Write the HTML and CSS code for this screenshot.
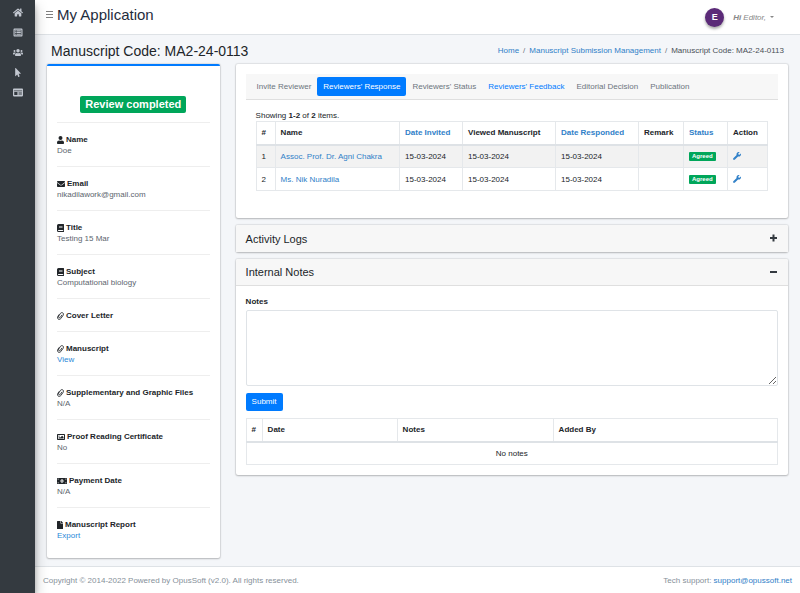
FILE: index.html
```
<!DOCTYPE html>
<html lang="en">
<head>
    <meta charset="UTF-8">
    <meta name="viewport" content="width=device-width, initial-scale=1.0">
    <title>Manuscript Code: MA2-24-0113</title>
    <link rel="stylesheet" href="styles.css">
</head>
<body>

    <!-- Icon set -->
    <svg class="sprite" aria-hidden="true">
        <symbol id="i-home" viewBox="0 0 576 512"><path d="M280 148 96 300v164a16 16 0 0 0 16 16h112a16 16 0 0 0 16-16v-96a16 16 0 0 1 16-16h64a16 16 0 0 1 16 16v96a16 16 0 0 0 16 16h112a16 16 0 0 0 16-16V300L296 148a12 12 0 0 0-16 0zM572 251l-84-69V44a12 12 0 0 0-12-12h-56a12 12 0 0 0-12 12v72l-89-74a48 48 0 0 0-61 0L4 251a12 12 0 0 0-2 17l26 31a12 12 0 0 0 17 2L280 107a12 12 0 0 1 15 0l236 194a12 12 0 0 0 17-2l25-31a12 12 0 0 0-1-17z"/></symbol>
        <symbol id="i-list" viewBox="0 0 512 512"><path fill-rule="evenodd" d="M464 32H48a48 48 0 0 0-48 48v352a48 48 0 0 0 48 48h416a48 48 0 0 0 48-48V80a48 48 0 0 0-48-48zM64 96h384v320H64zM96 128h64v64H96zm88 0h232v64H184zM96 224h64v64H96zm88 0h232v64H184zM96 320h64v64H96zm88 0h232v64H184z"/></symbol>
        <symbol id="i-users" viewBox="0 0 640 512"><path d="M96 224a64 64 0 1 0 0-128 64 64 0 0 0 0 128zm448 0a64 64 0 1 0 0-128 64 64 0 0 0 0 128zm32 32h-64c-18 0-34 7-45 19 40 22 69 62 75 109h66a32 32 0 0 0 32-32v-32a64 64 0 0 0-64-64zm-256 0a112 112 0 1 0 0-224 112 112 0 0 0 0 224zm77 32h-8a155 155 0 0 1-138 0h-8a115 115 0 0 0-115 115v29a48 48 0 0 0 48 48h288a48 48 0 0 0 48-48v-29a115 115 0 0 0-115-115zm-224-13c-11-12-27-19-45-19H64a64 64 0 0 0-64 64v32a32 32 0 0 0 32 32h66c6-47 35-87 75-109z"/></symbol>
        <symbol id="i-pointer" viewBox="0 0 320 512"><path d="M302 330H196l56 136c4 9 0 20-9 24l-49 21c-10 4-20-1-24-10l-53-129-87 89c-11 12-30 3-30-13V19C0 2 20-6 30 6l284 292c12 12 3 32-12 32z"/></symbol>
        <symbol id="i-news" viewBox="0 0 576 512"><path fill-rule="evenodd" d="M528 32H48A48 48 0 0 0 0 80v352a48 48 0 0 0 48 48h480a48 48 0 0 0 48-48V80a48 48 0 0 0-48-48zM48 144h480v36H48zM72 230h184v170H72zM320 230h192v30H320zm0 70h192v30H320zm0 70h192v30H320z"/></symbol>
        <symbol id="i-user" viewBox="0 0 448 512"><path d="M224 256a128 128 0 1 0 0-256 128 128 0 0 0 0 256zm90 32h-17a174 174 0 0 1-146 0h-17A134 134 0 0 0 0 422v42a48 48 0 0 0 48 48h352a48 48 0 0 0 48-48v-42a134 134 0 0 0-134-134z"/></symbol>
        <symbol id="i-mail" viewBox="0 0 512 512"><path d="M502 191c4-3 10 0 10 5v204a48 48 0 0 1-48 48H48a48 48 0 0 1-48-48V196c0-5 6-8 10-5 22 17 52 40 155 114 21 16 57 48 91 48 34 0 71-33 91-48 103-74 133-97 155-114zM256 320c23 0 57-29 74-42 133-96 143-105 174-129 5-4 8-10 8-17v-20a48 48 0 0 0-48-48H48a48 48 0 0 0-48 48v20c0 7 3 13 8 17 31 24 41 33 174 129 17 13 51 42 74 42z"/></symbol>
        <symbol id="i-book" viewBox="0 0 448 512"><path fill-rule="evenodd" d="M448 360V24a24 24 0 0 0-24-24H96A96 96 0 0 0 0 96v320a96 96 0 0 0 96 96h328a24 24 0 0 0 24-24v-16c0-8-4-14-9-19-4-15-4-59 0-74 5-4 9-11 9-19zM128 134c0-3 3-6 6-6h212c3 0 6 3 6 6v20c0 3-3 6-6 6H134c-3 0-6-3-6-6zm0 64c0-3 3-6 6-6h212c3 0 6 3 6 6v20c0 3-3 6-6 6H134c-3 0-6-3-6-6zm253 250H96a32 32 0 0 1 0-64h285c-2 17-2 47 0 64z"/></symbol>
        <symbol id="i-clip" viewBox="0 0 448 512"><path fill="none" stroke="currentColor" stroke-width="56" stroke-linecap="round" stroke-linejoin="round" d="M122 176 68 262C8 340 36 440 100 468c50 22 100 2 138-42L386 222c44-62 34-130-12-164-50-36-116-20-150 26L112 254c-26 42-20 84 10 106 32 22 68 10 92-20l96-138"/></symbol>
        <symbol id="i-image" viewBox="0 0 512 512"><path fill-rule="evenodd" d="M464 64H48a48 48 0 0 0-48 48v288a48 48 0 0 0 48 48h416a48 48 0 0 0 48-48V112a48 48 0 0 0-48-48zM64 128h384v256H64zM128 152a40 40 0 1 1 0 80 40 40 0 0 1 0-80zM96 352v-48l48-48 48 48 136-136 88 88v96z"/></symbol>
        <symbol id="i-money" viewBox="0 0 640 512"><path fill-rule="evenodd" d="M608 64H32A32 32 0 0 0 0 96v320a32 32 0 0 0 32 32h576a32 32 0 0 0 32-32V96a32 32 0 0 0-32-32zM48 400v-64a64 64 0 0 1 64 64zm0-224v-64h64a64 64 0 0 1-64 64zm272 192c-53 0-96-50-96-112s43-112 96-112 96 50 96 112-43 112-96 112zm272 32h-64a64 64 0 0 1 64-64zm0-224a64 64 0 0 1-64-64h64zM336 192v104h20v24h-72v-24h20v-68h-16v-24l24-12z"/></symbol>
        <symbol id="i-file" viewBox="0 0 384 512"><path fill-rule="evenodd" d="M224 136V0H24A24 24 0 0 0 0 24v464a24 24 0 0 0 24 24h336a24 24 0 0 0 24-24V160H248a24 24 0 0 1-24-24zM384 122v6H256V0h6c6 0 12 3 17 7l98 98c4 4 7 10 7 17z"/></symbol>
        <symbol id="i-wrench" viewBox="0 0 512 512"><path fill-rule="evenodd" d="M508 109c-2-9-13-12-20-5l-74 74-68-11-11-68 74-74c7-7 4-18-5-20a144 144 0 0 0-172 185L19 403a64 64 0 0 0 90 90l213-213a144 144 0 0 0 186-171zM64 472a24 24 0 1 1 0-48 24 24 0 0 1 0 48z"/></symbol>
    </svg>

    <nav class="sidebar" aria-label="Main">
        <a href="#" aria-label="Home"><svg class="icon"><use href="#i-home"/></svg></a>
        <a href="#" aria-label="Submissions"><svg class="icon"><use href="#i-list"/></svg></a>
        <a href="#" aria-label="Users"><svg class="icon"><use href="#i-users"/></svg></a>
        <a href="#" aria-label="Actions"><svg class="icon"><use href="#i-pointer"/></svg></a>
        <a href="#" aria-label="News"><svg class="icon"><use href="#i-news"/></svg></a>
    </nav>

    <div class="wrapper">
        <header class="navbar">
            <button class="menu-toggle" aria-label="Toggle menu"><span></span><span></span><span></span></button>
            <a class="brand" href="#">My Application</a>
            <span class="avatar">E</span>
            <button class="user-menu"><b>Hi</b> Editor, <span class="caret"></span></button>
        </header>

        <main class="content">
            <div class="content-header">
                <h1>Manuscript Code: MA2-24-0113</h1>
                <ol class="breadcrumb">
                    <li><a href="#">Home</a></li>
                    <li><a href="#">Manuscript Submission Management</a></li>
                    <li>Manuscript Code: MA2-24-0113</li>
                </ol>
            </div>

            <div class="row">
                <aside class="card profile">
                    <div class="state"><span class="state-badge">Review completed</span></div>
                    <div class="item">
                        <strong><svg class="icon w-7"><use href="#i-user"/></svg> Name</strong>
                        <p>Doe</p>
                    </div>
                    <div class="item">
                        <strong><svg class="icon w-8"><use href="#i-mail"/></svg> Email</strong>
                        <p>nikadilawork@gmail.com</p>
                    </div>
                    <div class="item">
                        <strong><svg class="icon w-7"><use href="#i-book"/></svg> Title</strong>
                        <p>Testing 15 Mar</p>
                    </div>
                    <div class="item">
                        <strong><svg class="icon w-7"><use href="#i-book"/></svg> Subject</strong>
                        <p>Computational biology</p>
                    </div>
                    <div class="item">
                        <strong><svg class="icon w-7"><use href="#i-clip"/></svg> Cover Letter</strong>
                    </div>
                    <div class="item">
                        <strong><svg class="icon w-7"><use href="#i-clip"/></svg> Manuscript</strong>
                        <p><a href="#">View</a></p>
                    </div>
                    <div class="item">
                        <strong><svg class="icon w-7"><use href="#i-clip"/></svg> Supplementary and Graphic Files</strong>
                        <p>N/A</p>
                    </div>
                    <div class="item">
                        <strong><svg class="icon w-8"><use href="#i-image"/></svg> Proof Reading Certificate</strong>
                        <p>No</p>
                    </div>
                    <div class="item">
                        <strong><svg class="icon w-10"><use href="#i-money"/></svg> Payment Date</strong>
                        <p>N/A</p>
                    </div>
                    <div class="item">
                        <strong><svg class="icon w-6"><use href="#i-file"/></svg> Manuscript Report</strong>
                        <p><a href="#">Export</a></p>
                    </div>
                </aside>

                <div class="main-col">
                    <section class="card responses">
                        <nav class="tabs" aria-label="Review">
                            <a href="#">Invite Reviewer</a>
                            <a class="active" href="#">Reviewers' Response</a>
                            <a href="#">Reviewers' Status</a>
                            <a class="highlight" href="#">Reviewers' Feedback</a>
                            <a href="#">Editorial Decision</a>
                            <a href="#">Publication</a>
                        </nav>
                        <div class="tab-pane">
                            <div class="summary">Showing <b>1-2</b> of <b>2</b> items.</div>
                            <table class="table reviewers">
                                <thead>
                                    <tr>
                                        <th>#</th>
                                        <th>Name</th>
                                        <th><a href="#">Date Invited</a></th>
                                        <th>Viewed Manuscript</th>
                                        <th><a href="#">Date Responded</a></th>
                                        <th>Remark</th>
                                        <th><a href="#">Status</a></th>
                                        <th>Action</th>
                                    </tr>
                                </thead>
                                <tbody>
                                    <tr>
                                        <td>1</td>
                                        <td><a href="#">Assoc. Prof. Dr. Agni Chakra</a></td>
                                        <td>15-03-2024</td>
                                        <td>15-03-2024</td>
                                        <td>15-03-2024</td>
                                        <td></td>
                                        <td><span class="badge">Agreed</span></td>
                                        <td><a href="#" aria-label="Manage"><svg class="icon w-8"><use href="#i-wrench"/></svg></a></td>
                                    </tr>
                                    <tr>
                                        <td>2</td>
                                        <td><a href="#">Ms. Nik Nuradila</a></td>
                                        <td>15-03-2024</td>
                                        <td>15-03-2024</td>
                                        <td>15-03-2024</td>
                                        <td></td>
                                        <td><span class="badge">Agreed</span></td>
                                        <td><a href="#" aria-label="Manage"><svg class="icon w-8"><use href="#i-wrench"/></svg></a></td>
                                    </tr>
                                </tbody>
                            </table>
                        </div>
                    </section>

                    <section class="card">
                        <div class="card-header collapsed">
                            <h2>Activity Logs</h2>
                            <button class="collapse-btn plus" aria-label="Expand"></button>
                        </div>
                    </section>

                    <section class="card">
                        <div class="card-header">
                            <h2>Internal Notes</h2>
                            <button class="collapse-btn" aria-label="Collapse"></button>
                        </div>
                        <div class="card-body">
                            <form>
                                <label for="notes">Notes</label>
                                <textarea id="notes" name="notes"></textarea>
                                <button class="btn" type="button">Submit</button>
                            </form>
                            <table class="table notes">
                                <thead>
                                    <tr>
                                        <th>#</th>
                                        <th>Date</th>
                                        <th>Notes</th>
                                        <th>Added By</th>
                                    </tr>
                                </thead>
                                <tbody>
                                    <tr>
                                        <td colspan="4" class="empty">No notes</td>
                                    </tr>
                                </tbody>
                            </table>
                        </div>
                    </section>
                </div>
            </div>
        </main>

        <footer class="footer">
            <span>Copyright © 2014-2022 Powered by OpusSoft (v2.0). All rights reserved.</span>
            <span>Tech support: <a href="mailto:support@opussoft.net">support@opussoft.net</a></span>
        </footer>
    </div>

</body>
</html>
```
FILE: styles.css
```
* {
    box-sizing: border-box;
}
body {
    margin: 0;
    display: flex;
    min-height: 100vh;
    font-family: "Liberation Sans", Arial, Helvetica, sans-serif;
    font-size: 8px;
    line-height: 11px;
    color: #212529;
    background-color: #f4f6f9;
}
a {
    color: #3080c8;
    text-decoration: none;
}
h1, h2, p {
    margin: 0;
    font-weight: 400;
}
button {
    font-family: inherit;
    font-size: 8px;
    border: none;
    background: none;
    padding: 0;
    cursor: pointer;
}
.sprite {
    display: none;
}
.icon {
    width: 9px;
    height: 8px;
    fill: currentColor;
}

/* Sidebar */
.sidebar {
    flex: 0 0 35px;
    display: flex;
    flex-direction: column;
    align-items: center;
    gap: 11px;
    padding-top: 8px;
    background-color: #343a40;
    box-shadow: 0 7px 14px rgba(0,0,0,0.25), 0 5px 5px rgba(0,0,0,0.22);
    z-index: 1;
}
.sidebar a {
    display: flex;
    height: 9px;
    color: #c2c7d0;
}
.sidebar .icon {
    width: 10px;
    height: 9px;
}
.wrapper {
    flex: 1;
    min-width: 0;
    display: flex;
    flex-direction: column;
}

/* Top bar */
.navbar {
    display: flex;
    align-items: center;
    height: 35px;
    padding: 0 26px 0 11px;
    background-color: #fff;
    border-bottom: 1px solid #dee2e6;
}
.menu-toggle {
    display: flex;
    flex-direction: column;
    gap: 2px;
    width: 7px;
    margin: 0 4px 6px 0;
}
.menu-toggle span {
    height: 1px;
    background-color: #7f7f7f;
}
.brand {
    flex: 1;
    font-size: 15px;
    line-height: 20px;
    padding-bottom: 4px;
    color: #1f2d3d;
}
.avatar {
    width: 19px;
    height: 19px;
    border-radius: 50%;
    background-color: #5b2a78;
    color: #fff;
    font-size: 9px;
    font-weight: 700;
    line-height: 19px;
    text-align: center;
    box-shadow: 0 2px 3px rgba(0,0,0,0.35);
}
.user-menu {
    display: flex;
    align-items: center;
    gap: 2px;
    margin-left: 9px;
    font-style: italic;
    color: #888;
}
.caret {
    margin-left: 2px;
    border: 2px solid transparent;
    border-top-color: #888;
    border-bottom: 0;
}

/* Page heading */
.content {
    flex: 1;
    padding: 0 12px 7px;
}
.content-header {
    display: flex;
    justify-content: space-between;
    align-items: center;
    height: 29px;
    padding: 0 4px;
}
.content-header h1 {
    font-size: 14px;
    line-height: 17px;
    padding-top: 3px;
}
.breadcrumb {
    display: flex;
    margin: 0;
    padding: 2px 0 0;
    list-style: none;
    color: #495057;
}
.breadcrumb li + li::before {
    content: "/";
    padding: 0 4px;
    color: #6c757d;
}
.row {
    display: grid;
    grid-template-columns: minmax(0, 5fr) minmax(0, 16fr);
    gap: 16px;
}
.main-col {
    display: flex;
    flex-direction: column;
    gap: 7px;
}
.card {
    background-color: #fff;
    border-radius: 2px;
    box-shadow: 0 0 1px 1px rgba(0,0,0,0.08), 0 1px 2px rgba(0,0,0,0.2);
}

/* Manuscript details */
.profile {
    border-top: 2px solid #007bff;
    padding: 30px 10px 7px;
}
.state {
    display: flex;
    justify-content: center;
    padding-bottom: 9px;
}
.state-badge {
    padding: 0 5px;
    border-radius: 2px;
    background-color: #00a65a;
    color: #fff;
    font-size: 11px;
    font-weight: 700;
    line-height: 17px;
}
.item {
    border-top: 1px solid #eee;
    padding: 11px 0 10px;
}
.item strong {
    display: flex;
    align-items: center;
    gap: 2px;
}
.item p {
    color: #5c656e;
}
.item p a {
    color: #2b88d8;
}
.w-6 {
    width: 6px;
}
.w-7 {
    width: 7px;
}
.w-8 {
    width: 8px;
}
.w-10 {
    width: 10px;
}

/* Tabs */
.responses {
    padding: 10px 10px 27px;
}
.tabs {
    display: flex;
    padding: 3px 5px;
    background-color: #f7f7f7;
    border-bottom: 1px solid #dfdfdf;
}
.tabs a {
    padding: 4px 6px;
    border-radius: 2px;
    color: #6c757d;
}
.tabs .active {
    background-color: #007bff;
    color: #fff;
}
.tabs .highlight {
    color: #007bff;
}
.tab-pane {
    padding: 10px 10px 0;
}

/* Tables */
.table {
    width: 100%;
    border-collapse: collapse;
    table-layout: fixed;
}
.table th, .table td {
    height: 23px;
    padding: 0 5px;
    border: 1px solid #e5e8eb;
    text-align: left;
    white-space: nowrap;
}
.table thead th {
    border-bottom: 2px solid #dee2e6;
}
.reviewers tbody tr:nth-child(odd) {
    background-color: #f2f2f2;
}
.reviewers th:nth-child(1) { width: 19px; }
.reviewers th:nth-child(3) { width: 63px; }
.reviewers th:nth-child(4) { width: 93px; }
.reviewers th:nth-child(5) { width: 83px; }
.reviewers th:nth-child(6) { width: 45px; }
.reviewers th:nth-child(7) { width: 44px; }
.reviewers th:nth-child(8) { width: 40px; }
.notes th:nth-child(1) { width: 16px; }
.notes th:nth-child(2) { width: 135px; }
.notes th:nth-child(3) { width: 156px; }
.table .empty {
    text-align: center;
}
.table .icon {
    display: block;
}
.badge {
    display: inline-block;
    padding: 0 3px;
    border-radius: 1px;
    background-color: #00a65a;
    color: #fff;
    font-size: 6px;
    font-weight: 700;
    line-height: 9px;
    vertical-align: middle;
}

/* Collapsible cards */
.card-header {
    display: flex;
    justify-content: space-between;
    align-items: center;
    height: 27px;
    padding: 0 10px;
    background-color: #f7f7f7;
    border-bottom: 1px solid #dfdfdf;
    border-radius: 2px 2px 0 0;
}
.card-header.collapsed {
    border-bottom: none;
}
.card-header h2 {
    font-size: 11px;
    line-height: 14px;
}
.collapse-btn {
    position: relative;
    width: 9px;
    height: 9px;
}
.collapse-btn::before, .collapse-btn.plus::after {
    content: "";
    position: absolute;
    top: 3px;
    left: 1px;
    width: 7px;
    height: 2px;
    background-color: #343a40;
}
.collapse-btn.plus::after {
    transform: rotate(90deg);
}
.card-body {
    padding: 10px;
}
.card-body label {
    display: block;
    margin-bottom: 3px;
    font-weight: 700;
}
textarea {
    display: block;
    width: 100%;
    height: 76px;
    border: 1px solid #dfe3e7;
    border-radius: 2px;
    font: inherit;
    resize: vertical;
}
.btn {
    margin: 7px 0;
    padding: 0 6px;
    border-radius: 2px;
    background-color: #007bff;
    color: #fff;
    line-height: 18px;
}

/* Footer */
.footer {
    display: flex;
    justify-content: space-between;
    padding: 8px 8px 7px;
    background-color: #fff;
    border-top: 1px solid #dee2e6;
    color: #869099;
}
```
